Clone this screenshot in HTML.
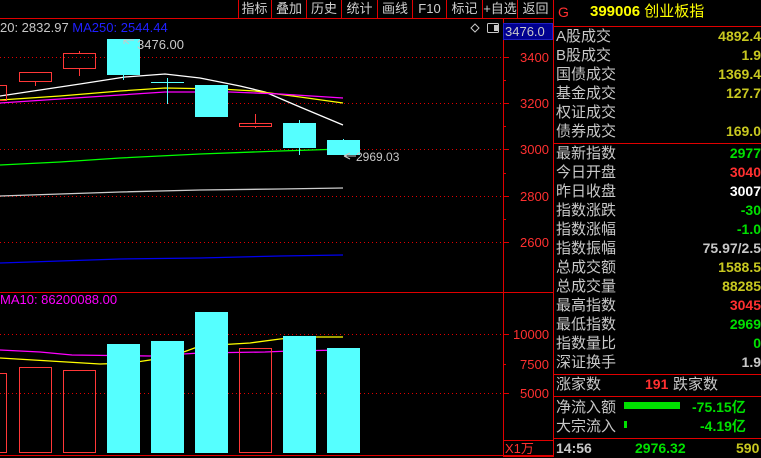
<!DOCTYPE html>
<html><head><meta charset="utf-8"><style>
body{margin:0;background:#000;width:761px;height:457px;overflow:hidden;position:relative;font-family:"Liberation Sans","Noto Sans CJK SC",sans-serif;}
.t{position:absolute;white-space:nowrap;font-size:14px;line-height:19px;}
.lb{color:#c8c8c8;left:556px;font-size:15px;}
.v{right:0;text-align:right;font-size:14px;}
.tb{position:absolute;top:0;height:18px;line-height:17px;font-size:13px;color:#d0d0d0;text-align:center}
</style></head><body>
<svg width="761" height="457" style="position:absolute;left:0;top:0">
<g stroke="#e00000" stroke-width="1" fill="none">
<line x1="0" y1="18.5" x2="553" y2="18.5"/>
<line x1="553.5" y1="0" x2="553.5" y2="457"/>
<line x1="503.5" y1="18" x2="503.5" y2="457"/>
<line x1="553" y1="26.5" x2="761" y2="26.5"/>
<line x1="553" y1="143.5" x2="761" y2="143.5"/>
<line x1="553" y1="374.5" x2="761" y2="374.5"/>
<line x1="553" y1="396.5" x2="761" y2="396.5"/>
<line x1="553" y1="438.5" x2="761" y2="438.5"/>
<line x1="0" y1="292.5" x2="553" y2="292.5"/>
<line x1="0" y1="455.5" x2="553" y2="455.5"/>
<g stroke-dasharray="1,3">
<line x1="0" y1="57.5" x2="503" y2="57.5"/><line x1="0" y1="103.5" x2="503" y2="103.5"/>
<line x1="0" y1="149.5" x2="503" y2="149.5"/><line x1="0" y1="196.5" x2="503" y2="196.5"/>
<line x1="0" y1="242.5" x2="503" y2="242.5"/><line x1="0" y1="334.5" x2="503" y2="334.5"/>
<line x1="0" y1="393.5" x2="503" y2="393.5"/>
</g>
<g>
<line x1="238.5" y1="0" x2="238.5" y2="18"/><line x1="271.5" y1="0" x2="271.5" y2="18"/>
<line x1="306.5" y1="0" x2="306.5" y2="18"/><line x1="341.5" y1="0" x2="341.5" y2="18"/>
<line x1="377.5" y1="0" x2="377.5" y2="18"/><line x1="412.5" y1="0" x2="412.5" y2="18"/>
<line x1="446.5" y1="0" x2="446.5" y2="18"/><line x1="482.5" y1="0" x2="482.5" y2="18"/>
<line x1="517.5" y1="0" x2="517.5" y2="18"/>
</g>
<g>
<line x1="503" y1="57.5" x2="509" y2="57.5"/><line x1="503" y1="80.5" x2="506" y2="80.5"/>
<line x1="503" y1="103.5" x2="509" y2="103.5"/><line x1="503" y1="126.5" x2="506" y2="126.5"/>
<line x1="503" y1="149.5" x2="509" y2="149.5"/><line x1="503" y1="173.5" x2="506" y2="173.5"/>
<line x1="503" y1="196.5" x2="509" y2="196.5"/><line x1="503" y1="219.5" x2="506" y2="219.5"/>
<line x1="503" y1="242.5" x2="509" y2="242.5"/><line x1="503" y1="334.5" x2="509" y2="334.5"/>
<line x1="503" y1="364.5" x2="506" y2="364.5"/><line x1="503" y1="393.5" x2="509" y2="393.5"/>
</g>
<rect x="503.5" y="440.5" width="50" height="16"/>
</g>
<rect x="503.5" y="23.5" width="49" height="16" fill="#000090" stroke="#2020c0"/>
<!-- MAs -->
<g fill="none" stroke-width="1.3">
<polyline stroke="#fff" points="0,96 40,90 80,84 125,77 165,74 200,78 240,86 265,92 300,107 343,125"/>
<polyline stroke="#ff0" points="0,100 60,96 120,91 165,88 220,89 255,91 300,97 343,103"/>
<polyline stroke="#f0f" points="0,103 60,99 120,95 165,92 230,92 280,94 343,98"/>
<polyline stroke="#0f0" points="0,165 60,162 120,158 200,154 280,151 343,149"/>
<polyline stroke="#ccc" points="0,196 60,194 120,192 200,190 280,189 343,188"/>
<polyline stroke="#0000f0" points="0,263 60,261 120,259 200,258 280,256 343,255"/>
<polyline stroke="#f0f" points="0,350 40,352 72,355 150,356 200,353 265,352 290,351 343,350"/>
<polyline stroke="#ff0" points="0,358 50,361 100,364 130,363 170,357 200,346 250,343 280,339 300,337 343,337"/>
</g>
<!-- candles -->
<g stroke="#ff3838" fill="none">
<rect x="-1.5" y="85.5" width="8" height="15"/>
<rect x="19.5" y="72.5" width="32" height="9"/><line x1="35.5" y1="82" x2="35.5" y2="86"/>
<rect x="63.5" y="53.5" width="32" height="15"/><line x1="79.5" y1="51" x2="79.5" y2="53"/><line x1="79.5" y1="69" x2="79.5" y2="76"/>
<rect x="239.5" y="123.5" width="32" height="3"/><line x1="255.5" y1="114" x2="255.5" y2="123"/><line x1="255.5" y1="127" x2="255.5" y2="128"/>
<rect x="-1.5" y="373.5" width="8" height="79"/>
<rect x="19.5" y="367.5" width="32" height="85"/>
<rect x="63.5" y="370.5" width="32" height="82"/>
<rect x="239.5" y="348.5" width="32" height="104"/>
</g>
<g fill="#55ffff" stroke="#55ffff">
<rect x="107" y="39" width="33" height="36" stroke="none"/><line x1="123.5" y1="75" x2="123.5" y2="80"/>
<line x1="151" y1="82.5" x2="184" y2="82.5"/><line x1="167.5" y1="78" x2="167.5" y2="104"/>
<rect x="195" y="85" width="33" height="32" stroke="none"/>
<rect x="283" y="123" width="33" height="25" stroke="none"/><line x1="299.5" y1="120" x2="299.5" y2="155"/>
<rect x="327" y="140" width="33" height="15" stroke="none"/><line x1="343.5" y1="139" x2="343.5" y2="140"/>
<rect x="107" y="344" width="33" height="109" stroke="none"/>
<rect x="151" y="341" width="33" height="112" stroke="none"/>
<rect x="195" y="312" width="33" height="141" stroke="none"/>
<rect x="283" y="336" width="33" height="117" stroke="none"/>
<rect x="327" y="348" width="33" height="105" stroke="none"/>
</g>
<g stroke="#c8c8c8" fill="none">
<path d="M124 40 L129 44 M124 40 L134 40 M124 40 L124 44"/>
<path d="M344 156 L350 153 M344 156 L350 159 M344 156 L356 156"/>
<path d="M475 24 L479 28 L475 32 L471 28 Z"/>
<rect x="487.5" y="23.5" width="11" height="9" rx="1"/>
</g>
<rect x="494" y="25" width="4" height="6" fill="#c8c8c8"/>
<rect x="624" y="402" width="56" height="7" fill="#00e000"/>
<rect x="624" y="421" width="3" height="7" fill="#00e000"/>
</svg>
<div class="tb" style="left:238px;width:33px">指标</div>
<div class="tb" style="left:272px;width:34px">叠加</div>
<div class="tb" style="left:307px;width:34px">历史</div>
<div class="tb" style="left:342px;width:35px">统计</div>
<div class="tb" style="left:378px;width:34px">画线</div>
<div class="tb" style="left:413px;width:33px">F10</div>
<div class="tb" style="left:447px;width:35px">标记</div>
<div class="tb" style="left:483px;width:34px">+自选</div>
<div class="tb" style="left:518px;width:35px">返回</div>
<div class="t" style="left:0;top:18px;font-size:13px;color:#c8c8c8">20: 2832.97 <span style="color:#2020ff">MA250: 2544.44</span></div>
<div class="t" style="left:137px;top:35px;font-size:13px;color:#c8c8c8">3476.00</div>
<div class="t" style="left:356px;top:148px;font-size:12px;color:#c8c8c8">2969.03</div>
<div class="t" style="left:0;top:290px;font-size:13px;color:#f0f">MA10: 86200088.00</div>
<div class="t" style="left:505px;top:22px;font-size:13px;color:#c8c8c8">3476.0</div>
<div class="t" style="left:520px;top:48px;font-size:13px;color:#ff3030">3400</div>
<div class="t" style="left:520px;top:94px;font-size:13px;color:#ff3030">3200</div>
<div class="t" style="left:520px;top:140px;font-size:13px;color:#ff3030">3000</div>
<div class="t" style="left:520px;top:187px;font-size:13px;color:#ff3030">2800</div>
<div class="t" style="left:520px;top:233px;font-size:13px;color:#ff3030">2600</div>
<div class="t" style="left:513px;top:325px;font-size:13px;color:#ff3030">10000</div>
<div class="t" style="left:520px;top:355px;font-size:13px;color:#ff3030">7500</div>
<div class="t" style="left:520px;top:384px;font-size:13px;color:#ff3030">5000</div>
<div class="t" style="left:505px;top:439px;font-size:13px;color:#ff3030">X1万</div>
<div class="t" style="left:558px;top:3px;font-size:14px;color:#ff3030">G</div>
<div class="t" style="left:590px;top:2px;font-size:15px;color:#ff0;font-weight:bold">399006 <span style="font-weight:normal">创业板指</span></div>
<div class="t lb" style="top:27px">A股成交</div><div class="t v" style="top:27px;color:#c8c820;font-weight:bold">4892.4</div>
<div class="t lb" style="top:46px">B股成交</div><div class="t v" style="top:46px;color:#c8c820;font-weight:bold">1.9</div>
<div class="t lb" style="top:65px">国债成交</div><div class="t v" style="top:65px;color:#c8c820;font-weight:bold">1369.4</div>
<div class="t lb" style="top:84px">基金成交</div><div class="t v" style="top:84px;color:#c8c820;font-weight:bold">127.7</div>
<div class="t lb" style="top:103px">权证成交</div>
<div class="t lb" style="top:122px">债券成交</div><div class="t v" style="top:122px;color:#c8c820;font-weight:bold">169.0</div>
<div class="t lb" style="top:144px">最新指数</div><div class="t v" style="top:144px;color:#00e000;font-weight:bold">2977</div>
<div class="t lb" style="top:163px">今日开盘</div><div class="t v" style="top:163px;color:#ff3030;font-weight:bold">3040</div>
<div class="t lb" style="top:182px">昨日收盘</div><div class="t v" style="top:182px;color:#fff;font-weight:bold">3007</div>
<div class="t lb" style="top:201px">指数涨跌</div><div class="t v" style="top:201px;color:#00e000;font-weight:bold">-30</div>
<div class="t lb" style="top:220px">指数涨幅</div><div class="t v" style="top:220px;color:#00e000;font-weight:bold">-1.0</div>
<div class="t lb" style="top:239px">指数振幅</div><div class="t v" style="top:239px;color:#c8c8c8;font-weight:bold">75.97/2.5</div>
<div class="t lb" style="top:258px">总成交额</div><div class="t v" style="top:258px;color:#c8c820;font-weight:bold">1588.5</div>
<div class="t lb" style="top:277px">总成交量</div><div class="t v" style="top:277px;color:#c8c820;font-weight:bold">88285</div>
<div class="t lb" style="top:296px">最高指数</div><div class="t v" style="top:296px;color:#ff3030;font-weight:bold">3045</div>
<div class="t lb" style="top:315px">最低指数</div><div class="t v" style="top:315px;color:#00e000;font-weight:bold">2969</div>
<div class="t lb" style="top:334px">指数量比</div><div class="t v" style="top:334px;color:#00e000;font-weight:bold">0</div>
<div class="t lb" style="top:353px">深证换手</div><div class="t v" style="top:353px;color:#c8c8c8;font-weight:bold">1.9</div>
<div class="t lb" style="top:375px">涨家数</div>
<div class="t" style="left:645px;top:375px;color:#ff3030;font-weight:bold">191</div>
<div class="t" style="left:673px;top:375px;color:#c8c8c8;font-size:15px">跌家数</div>
<div class="t lb" style="top:398px">净流入额</div><div class="t" style="left:692px;top:398px;color:#00e000;font-weight:bold">-75.15亿</div>
<div class="t lb" style="top:417px">大宗流入</div><div class="t" style="left:700px;top:417px;color:#00e000;font-weight:bold">-4.19亿</div>
<div class="t" style="left:556px;top:439px;color:#c8c8c8;font-weight:bold">14:56</div>
<div class="t" style="left:635px;top:439px;color:#00e000;font-weight:bold">2976.32</div>
<div class="t" style="left:736px;top:439px;color:#c8c820;font-weight:bold">590</div>
</body></html>
